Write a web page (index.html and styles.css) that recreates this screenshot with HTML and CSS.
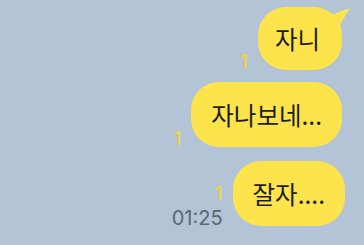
FILE: index.html
```html
<!DOCTYPE html>
<html lang="ko">
<head>
  <meta charset="UTF-8">
  <title>Chat</title>
  <link rel="stylesheet" href="styles.css">
</head>
<body>
  <div class="chat">
    <div class="row">
      <div class="meta"><span class="unread">1</span></div>
      <div class="bubble first">자니</div>
    </div>
    <div class="row">
      <div class="meta"><span class="unread">1</span></div>
      <div class="bubble">자나보네...</div>
    </div>
    <div class="row last">
      <div class="meta">
        <span class="unread">1</span>
        <span class="time">01:25</span>
      </div>
      <div class="bubble">잘자....</div>
    </div>
  </div>
</body>
</html>
```

FILE: styles.css
```css
body {
  margin: 0;
  background: #b2c4d6;
  font-family: "Noto Sans CJK KR", "Noto Sans", sans-serif;
}

.chat {
  display: flex;
  flex-direction: column;
  align-items: flex-end;
  gap: 12px;
  padding: 7px 22px 0 0;
}

.row {
  display: flex;
  align-items: flex-end;
  gap: 10px;
}

.row.last {
  margin-top: 2px;
  margin-right: -3px;
}

.meta {
  display: flex;
  flex-direction: column;
  align-items: flex-end;
  gap: 8px;
  font-family: "Inter", "Noto Sans", sans-serif;
}

.unread {
  color: #f2d43c;
  font-size: 19px;
  font-weight: 500;
  line-height: 16px;
}

.time {
  color: #5b6874;
  font-size: 20px;
  line-height: 16px;
}

.bubble {
  position: relative;
  background: #fde44c;
  color: #1d1d1d;
  font-size: 24.5px;
  height: 65px;
  line-height: 65px;
  padding: 0 20px;
  border-radius: 28px;
}

.bubble.first {
  height: 63px;
  line-height: 63px;
  padding: 0 22px 0 17px;
}

.bubble.first::after {
  content: "";
  position: absolute;
  top: 1px;
  right: -8px;
  width: 24px;
  height: 22px;
  background: #fde44c;
  clip-path: polygon(0 40%, 100% 0, 45% 100%);
}
```
